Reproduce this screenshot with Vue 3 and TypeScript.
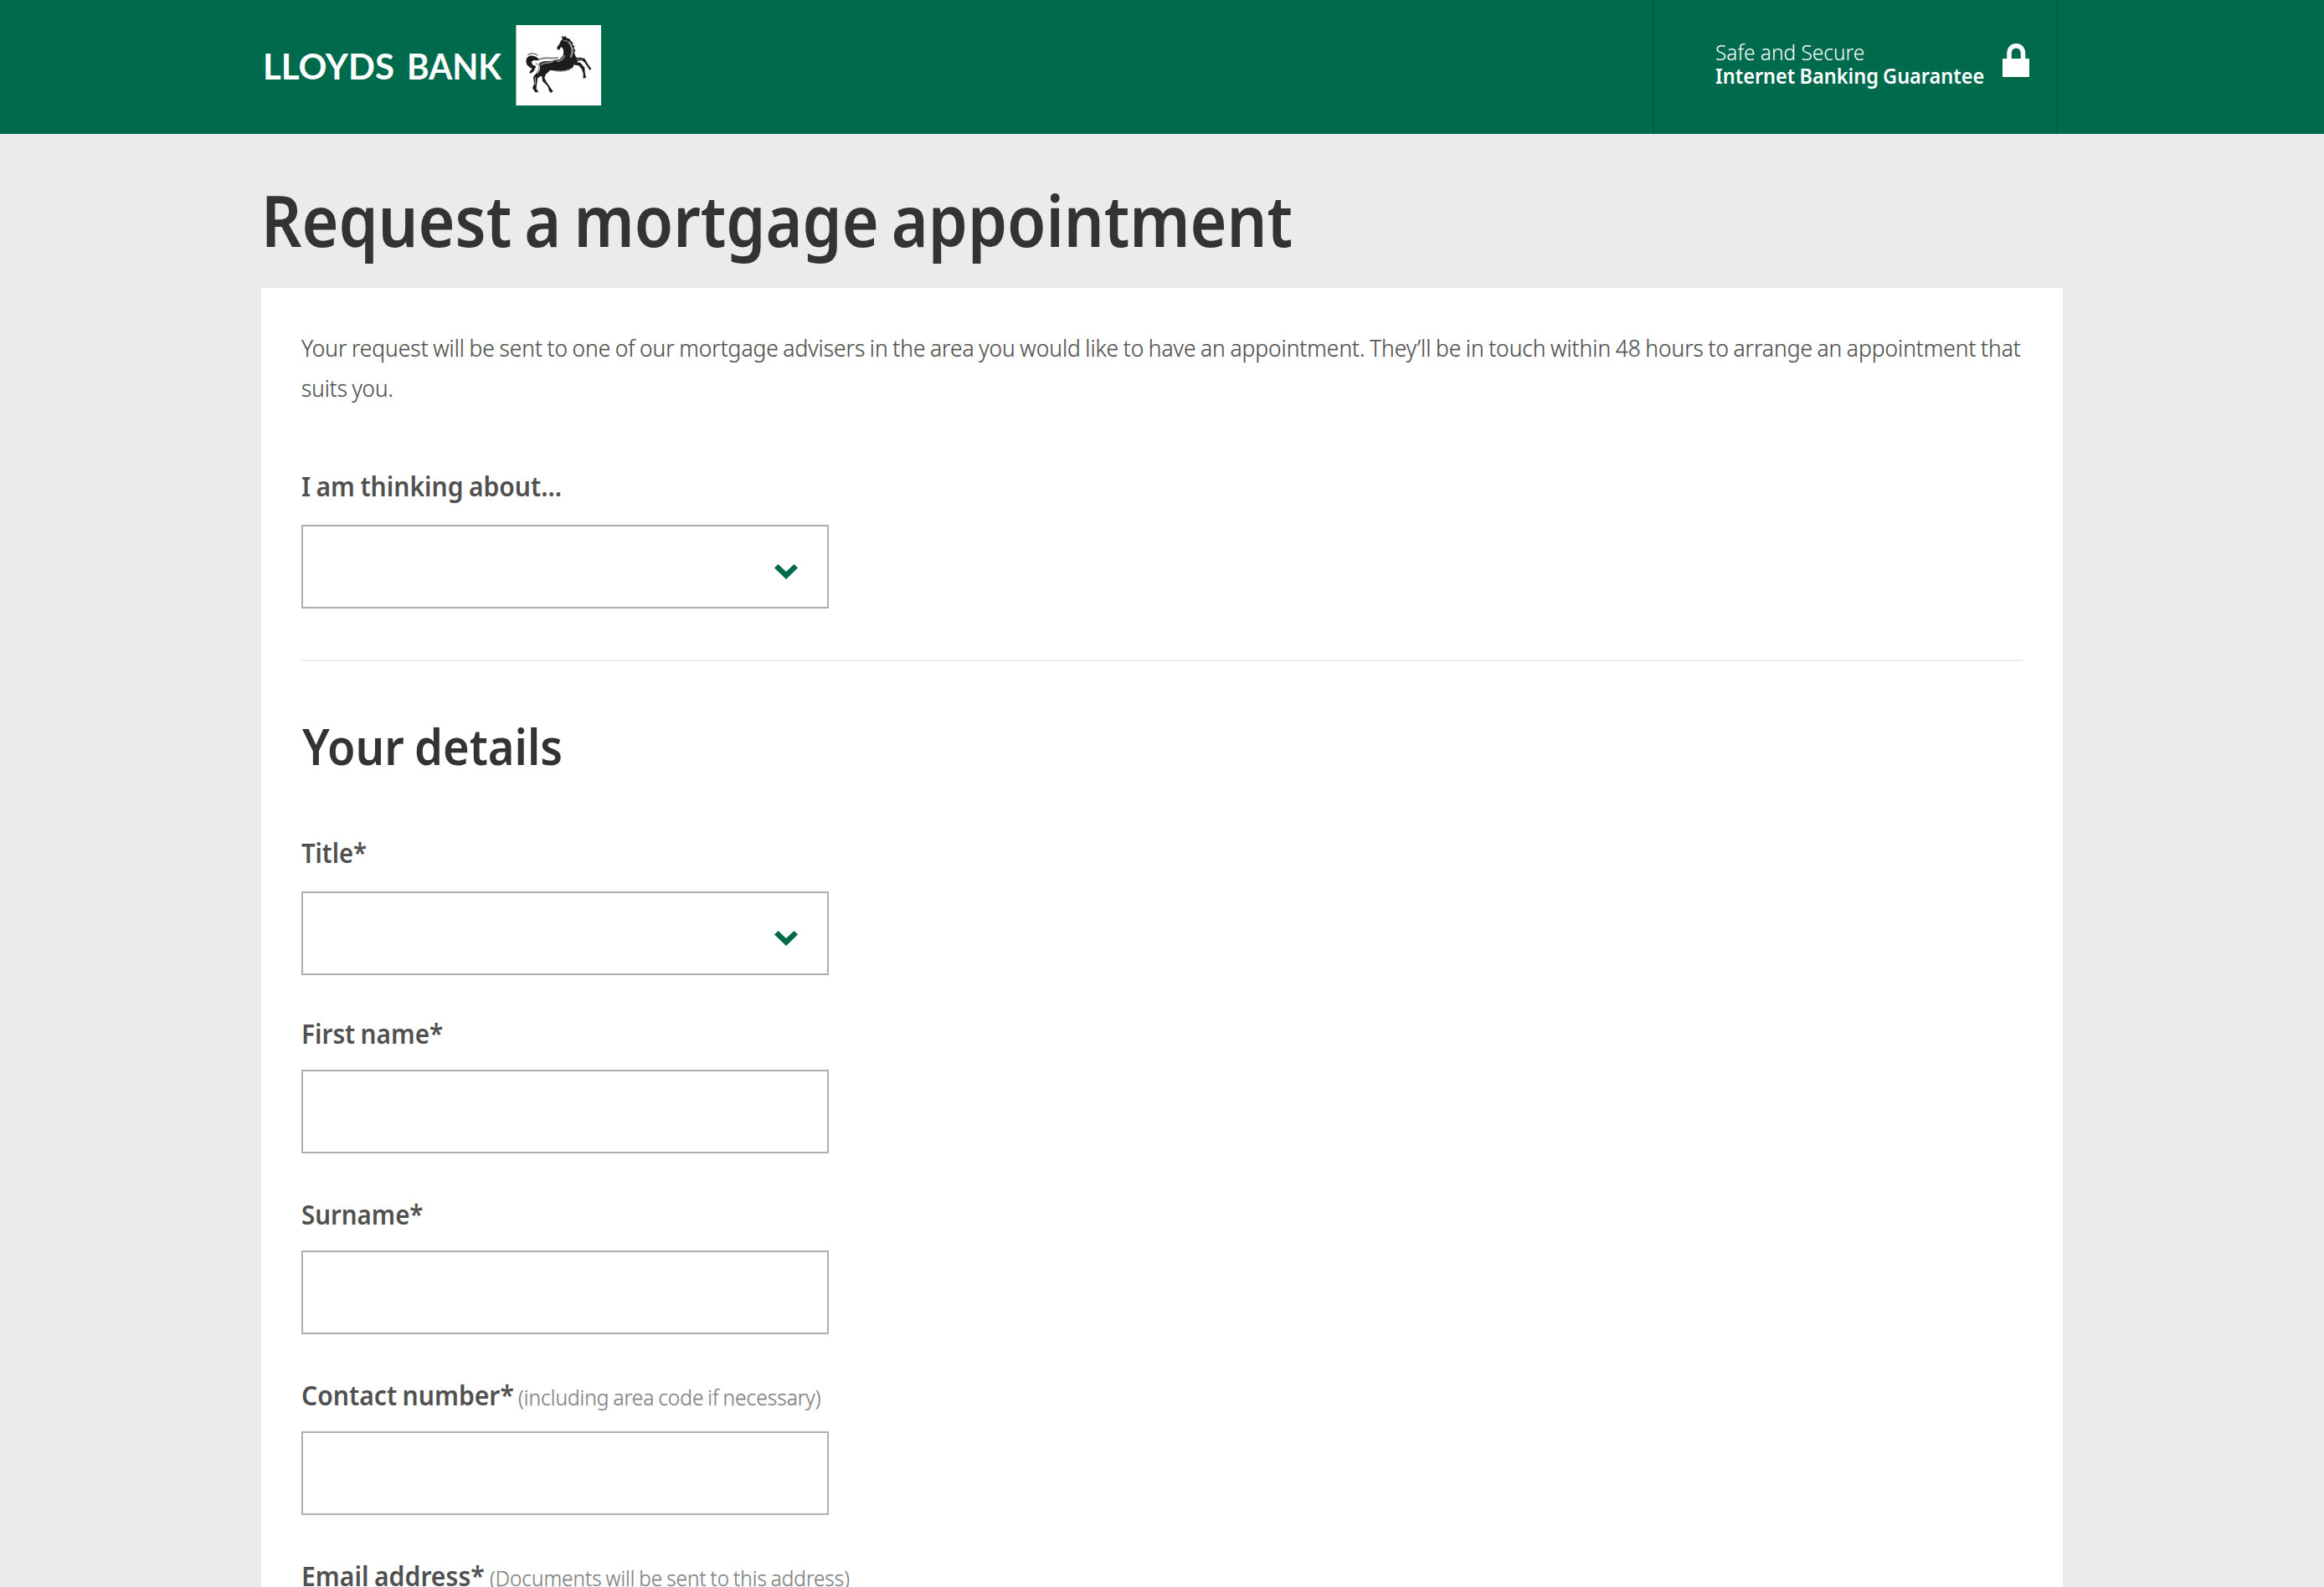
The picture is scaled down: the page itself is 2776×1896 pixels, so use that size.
<script setup lang="ts">
interface Piece {
  text: string
  width: number
  scale: number
}
interface Field {
  id: string
  label: Piece
  hint?: Piece
  kind: 'select' | 'input'
}

const topic: Field = {
  id: 'topic',
  kind: 'select',
  label: { text: 'I am thinking about...', width: 315, scale: 0.91 },
}

const details: Field[] = [
  { id: 'title', kind: 'select', label: { text: 'Title*', width: 78, scale: 0.884 } },
  { id: 'first', kind: 'input', label: { text: 'First name*', width: 170, scale: 0.903 } },
  { id: 'surname', kind: 'input', label: { text: 'Surname*', width: 146, scale: 0.893 } },
  {
    id: 'phone',
    kind: 'input',
    label: { text: 'Contact number*', width: 259, scale: 0.912 },
    hint: { text: '(including area code if necessary)', width: 363, scale: 0.94 },
  },
  {
    id: 'email',
    kind: 'input',
    label: { text: 'Email address*', width: 225, scale: 0.914 },
    hint: { text: '(Documents will be sent to this address)', width: 431, scale: 0.934 },
  },
]

const intro: Piece[] = [
  {
    text: 'Your request will be sent to one of our mortgage advisers in the area you would like to have an appointment. They’ll be in touch within 48 hours to arrange an appointment that',
    width: 2056,
    scale: 0.94,
  },
  { text: 'suits you.', width: 110, scale: 0.93 },
]

// The brand face is narrower than the system one, so each run is condensed to its own width.
const fit = (p: Piece) => ({ width: `${p.width}px`, transform: `scaleX(${p.scale})` })
</script>

<template>
  <div class="page">
    <header class="bar">
      <div class="bar-inner">
        <div class="logo">
          <span class="wordmark"><span class="lloyds">LLOYDS</span><span class="bank">BANK</span></span>
          <svg class="horse" viewBox="18 18 306 288" aria-hidden="true">
            <rect x="18" y="18" width="306" height="288" fill="#fff" />
            <rect x="18" y="18" width="3" height="288" fill="#8fbfae" />
            <g fill="#1d1d1b">
              <path d="M183 56 L190 60 L197 57 L199 63 L212 68 L216 76 L223 80 L222 88 L229 94 L226 101 L232 108 L228 116 L231 126 L234 133 L243 136 L239 151 L228 158 L222 171 L208 178 L186 183 L160 182 L142 179 L128 193 L112 202 L101 200 L96 190 L100 168 L104 153 L118 148 L148 146 L176 140 L187 128 L190 115 L187 101 L180 96 L174 107 L167 105 L166 97 L174 87 L179 75 L185 70 Z" />
              <path d="M104 144 C96 132 84 125 68 128 C55 132 52 147 59 161 L71 171 L77 174 L67 186 L71 192 L83 183 L91 165 L80 161 L74 151 L82 144 L94 145 Z" />
              <path d="M98 182 L81 204 L84 229 L78 243 L88 259 L100 259 L92 246 L94 226 L97 208 L113 197 Z" />
              <path d="M111 193 L114 218 L133 238 L138 254 L144 261 L152 256 L141 240 L128 221 L121 207 L127 190 Z" />
              <path d="M228 136 L251 134 L265 138 L279 161 L289 174 L284 180 L276 168 L265 152 L257 145 L234 146 Z" />
              <path d="M229 150 L249 152 L265 170 L266 187 L270 207 L260 209 L260 191 L254 175 L244 163 L229 161 Z" />
            </g>
            <g fill="none" stroke-linecap="round">
              <path d="M62 124 C74 118 88 120 97 126" stroke="#777" stroke-width="4" />
              <path d="M103 141 C122 130 146 141 168 135" stroke="#888" stroke-width="6" />
              <path d="M91 157 C105 157 107 176 94 189" stroke="#b0b0b0" stroke-width="6" />
              <path d="M109 159 C122 151 138 154 150 149" stroke="#888" stroke-width="5" />
              <path d="M210 80 C222 95 224 114 216 131" stroke="#999" stroke-width="7" />
              <path d="M190 75 C195 71 202 74 205 78" stroke="#777" stroke-width="4" />
              <path d="M193 128 C188 140 179 146 167 148" stroke="#888" stroke-width="5" />
              <path d="M88 207 L88 231" stroke="#888" stroke-width="4" />
              <path d="M160 182 C178 185 197 183 212 177" stroke="#888" stroke-width="4" />
              <path d="M236 141 L256 141" stroke="#888" stroke-width="3" />
            </g>
          </svg>
        </div>
        <div class="secure">
          <div class="secure-text">
            <span class="safe">Safe and Secure</span>
            <span class="guarantee">Internet Banking Guarantee</span>
          </div>
          <svg class="lock" viewBox="0 0 32 40" aria-hidden="true">
            <path d="M8 20 V12 C8 -0.5 24.5 -0.5 24.5 12 V20" fill="none" stroke="#fff" stroke-width="5.5" />
            <rect y="18" width="32" height="22" fill="#fff" />
          </svg>
        </div>
      </div>
    </header>

    <main class="main">
      <h1><span>Request a mortgage appointment</span></h1>
      <section class="card">
        <p class="intro">
          <span v-for="line in intro" :key="line.text" class="run" :style="fit(line)">{{ line.text }}</span>
        </p>
        <div class="field">
          <div class="label"><span class="run" :style="fit(topic.label)">{{ topic.label.text }}</span></div>
          <div class="box select">
            <svg class="chevron" viewBox="0 0 28 18" aria-hidden="true">
              <path d="M4.5 0 L14 9 L23.5 0 L28 4.6 L14 18 L0 4.6 Z" fill="#006a4d" />
            </svg>
          </div>
        </div>
        <hr />
        <h2><span>Your details</span></h2>
        <div v-for="f in details" :key="f.id" class="field" :class="f.kind">
          <div class="label">
            <span class="run" :style="fit(f.label)">{{ f.label.text }}</span>
            <span v-if="f.hint" class="run hint" :style="fit(f.hint)">{{ f.hint.text }}</span>
          </div>
          <div class="box" :class="f.kind">
            <svg v-if="f.kind === 'select'" class="chevron" viewBox="0 0 28 18" aria-hidden="true">
              <path d="M4.5 0 L14 9 L23.5 0 L28 4.6 L14 18 L0 4.6 Z" fill="#006a4d" />
            </svg>
          </div>
        </div>
      </section>
    </main>
  </div>
</template>

<style>
body {
  background: #ebebeb;
}
</style>

<style scoped>
.page {
  height: 1896px;
  overflow: hidden;
  background: #ebebeb;
  color: #505050;
  font-family: "Noto Sans", "Open Sans", sans-serif;
}
.bar {
  height: 160px;
  background: #006a4d;
}
.bar-inner {
  width: 2152px;
  height: 160px;
  margin: 0 auto;
  display: flex;
  justify-content: space-between;
}
.logo {
  display: flex;
  align-items: flex-start;
  padding-top: 30px;
}
.wordmark {
  display: flex;
  gap: 15px;
  width: 304px;
  padding: 24px 0 0 2px;
  box-sizing: border-box;
  font: 700 42px/50px "Lato", sans-serif;
  color: #fff;
}
.lloyds {
  width: 157px;
}
.lloyds,
.bank {
  transform-origin: 0 0;
}
.bank {
  transform: scaleX(0.962);
}
.horse {
  width: 102px;
  height: 96px;
}
.secure {
  box-sizing: border-box;
  width: 484px;
  height: 160px;
  margin-right: 6px;
  padding: 48px 0 0 73px;
  border-left: 2px solid #005c43;
  border-right: 2px solid #005c43;
  display: flex;
  align-items: flex-start;
  color: #fff;
}
.secure-text {
  width: 343px;
  font-size: 26px;
  line-height: 28px;
  white-space: nowrap;
}
.secure-text span {
  display: block;
  transform-origin: 0 0;
}
.safe {
  font-weight: 300;
  transform: scaleX(0.94);
}
.guarantee {
  font-weight: 600;
  word-spacing: -1px;
  transform: scaleX(0.903);
}
.lock {
  width: 32px;
  height: 40px;
  margin-top: 4px;
}
.main {
  width: 2152px;
  margin: 0 auto;
  padding-top: 43px;
}
h1 {
  margin: 0;
  height: 123px;
  font-size: 84px;
  line-height: 120px;
  font-weight: 600;
  color: #333;
  white-space: nowrap;
  border-bottom: 2px solid #eee;
}
h1 span {
  display: block;
  word-spacing: -5px;
  transform: scaleX(0.896);
  transform-origin: 0 0;
}
.card {
  margin-top: 16px;
  padding: 47px 48px 0;
  background: #fff;
  height: 1600px;
}
.run {
  display: block;
  white-space: nowrap;
  transform-origin: 0 0;
}
.intro {
  margin: 0 0 70px;
  font-size: 28px;
  line-height: 48px;
  font-weight: 300;
  word-spacing: -1.35px;
  -webkit-text-stroke: 0.25px currentColor;
}
.label {
  display: flex;
  height: 47px;
  font-size: 33px;
  line-height: 48px;
  font-weight: 600;
  word-spacing: -1.5px;
}
.hint {
  font-size: 26px;
  line-height: 52px;
  font-weight: 300;
  color: #808080;
  -webkit-text-stroke: 0.25px currentColor;
}
.box {
  box-sizing: border-box;
  width: 630px;
  height: 100px;
  border: 2px solid #afafaf;
}
.box.select {
  margin-top: 23px;
  display: flex;
  justify-content: flex-end;
  padding: 45px 35px 0 0;
}
.box.input {
  margin-top: 20px;
}
.chevron {
  width: 28px;
  height: 18px;
}
hr {
  margin: 61px 0 61px;
  border: 0;
  height: 2px;
  background: #efefef;
}
h2 {
  margin: 0 0 64px;
  height: 80px;
  font-size: 60px;
  line-height: 80px;
  font-weight: 600;
  color: #333;
}
h2 span {
  display: block;
  white-space: nowrap;
  word-spacing: -2px;
  transform: translateX(1px) scaleX(0.905);
  transform-origin: 0 0;
}
.field.select {
  margin-bottom: 46px;
}
.field.input {
  margin-bottom: 49px;
}
</style>
